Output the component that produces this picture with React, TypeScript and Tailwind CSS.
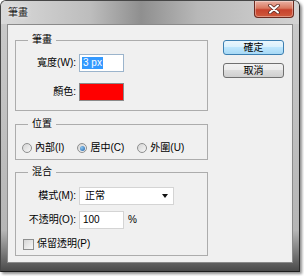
function CloseButton() {
  return (
    <div className="w-[40px] h-[17px] flex items-center justify-center rounded-b-[4px] border border-t-0 border-[#6b2a20] bg-[linear-gradient(to_bottom,#eab1a4,#d9785f_45%,#c7422d_55%,#cf5a3c)] shadow-[inset_0_0_0_1px_rgba(255,255,255,0.35)]">
      <svg width="12" height="10" viewBox="0 0 12 10">
        <path d="M2 1.5 L10 8.5 M10 1.5 L2 8.5" stroke="#5a2a22" strokeWidth="3.6" strokeLinecap="round" />
        <path d="M2 1.5 L10 8.5 M10 1.5 L2 8.5" stroke="#ffffff" strokeWidth="2" strokeLinecap="round" />
      </svg>
    </div>
  );
}

function Radio({ checked }: { checked?: boolean }) {
  return (
    <span className="w-[10px] h-[10px] rounded-full border border-[#8e8f8f] bg-[linear-gradient(135deg,#d4d4d4,#f7f7f7)] flex items-center justify-center">
      {checked && <span className="w-[5px] h-[5px] rounded-full bg-[radial-gradient(circle_at_35%_35%,#8cc6f0,#1d5fa8)]" />}
    </span>
  );
}

function Button({ label, primary }: { label: string; primary?: boolean }) {
  return (
    <div
      className={
        primary
          ? "w-[61px] h-[15px] flex items-center justify-center rounded-[3px] border border-[#3c7fb1] bg-[linear-gradient(to_bottom,#eaf6fd,#d9f0fc_50%,#bee6fd_50%,#a7d9f5)]"
          : "w-[61px] h-[15px] flex items-center justify-center rounded-[3px] border border-[#707070] bg-[linear-gradient(to_bottom,#f2f2f2,#ebebeb_50%,#dddddd_50%,#cfcfcf)]"
      }
    >
      {label}
    </div>
  );
}

export default function App() {
  return (
    <div className="w-[304px] h-[276px] bg-white font-['Liberation_Sans','Noto_Sans_CJK_TC',sans-serif] text-[10px] leading-none text-black">
      <div className="w-[300px] h-[272px] flex flex-col rounded-t-[6px] border border-[#464646] border-b-[#1e1e1e] border-r-[#2a2a2a] shadow-[2px_2px_3px_rgba(0,0,0,0.45)] bg-[linear-gradient(to_bottom,#cbcbcb,#b6b6b6_85%,#4a4a4a)]">
        {/* title bar */}
        <div className="h-[23px] flex items-start justify-between pl-[7px] pr-[5px] rounded-t-[5px] bg-[linear-gradient(to_right,#dadada,#bdbdbd_30%,#8f8f8f_47%,#b8b8b8_66%,#d3d3d3)]">
          <span className="mt-[7px] text-[#1a1a1a] [text-shadow:0_0_4px_#ffffff]">筆畫</span>
          <CloseButton />
        </div>

        {/* content */}
        <div className="flex-1 flex px-[6px] pb-[8px]">
          <div className="flex-1 flex border border-[#8a8a8a] bg-[#f0f0f0]">
            <div className="w-[200px] pl-[7px] pt-[8px] flex flex-col">
              {/* 筆畫 */}
              <fieldset className="w-[193px] h-[78px] border border-[#acacac]">
                <legend className="ml-[12px] px-[4px] h-[14px] leading-[14px]">筆畫</legend>
                <div className="mt-[7px] grid grid-cols-[60px_45px] gap-x-[3px] gap-y-[11px] items-center">
                  <span className="text-right">寬度(W):</span>
                  <div className="h-[18px] flex items-center pl-[2px] bg-white border border-[#9bb4cc]">
                    <span className="bg-[#3399ff] text-white px-[1px] leading-[12px]">3 px</span>
                  </div>
                  <span className="text-right">顏色:</span>
                  <div className="h-[18px] bg-[#ff0000] border border-[#8a8a8a]" />
                </div>
              </fieldset>

              {/* 位置 */}
              <fieldset className="mt-[6px] w-[193px] h-[43px] border border-[#acacac]">
                <legend className="ml-[12px] px-[4px] h-[14px] leading-[14px]">位置</legend>
                <div className="mt-[10px] h-[14px] pl-[6px] flex items-center">
                  <Radio />
                  <span className="ml-[3px]">內部(I)</span>
                  <span className="ml-[13px]"><Radio checked /></span>
                  <span className="ml-[3px]">居中(C)</span>
                  <span className="ml-[13px]"><Radio /></span>
                  <span className="ml-[3px]">外圍(U)</span>
                </div>
              </fieldset>

              {/* 混合 */}
              <fieldset className="mt-[5px] w-[193px] h-[91px] border border-[#acacac]">
                <legend className="ml-[12px] px-[4px] h-[14px] leading-[14px]">混合</legend>
                <div className="mt-[8px] grid grid-cols-[60px_auto] gap-x-[3px] gap-y-[6px] items-center">
                  <span className="text-right">模式(M):</span>
                  <div className="w-[95px] h-[18px] flex items-center justify-between pl-[5px] pr-[5px] bg-white border border-[#d4d4d4]">
                    <span>正常</span>
                    <svg width="6" height="4" viewBox="0 0 6 4">
                      <path d="M0 0 L6 0 L3 4 Z" fill="#111111" />
                    </svg>
                  </div>
                  <span className="text-right">不透明(O):</span>
                  <div className="flex items-center">
                    <div className="w-[45px] h-[18px] flex items-center pl-[3px] bg-white border border-[#d4d4d4]">100</div>
                    <span className="ml-[4px]">%</span>
                  </div>
                </div>
                <div className="mt-[8px] pl-[7px] h-[14px] flex items-center">
                  <span className="w-[11px] h-[11px] border border-[#8e8f8f] bg-[linear-gradient(135deg,#d6d6d6,#f8f8f8)]" />
                  <span className="ml-[3px]">保留透明(P)</span>
                </div>
              </fieldset>
            </div>

            {/* buttons */}
            <div className="ml-[15px] pt-[15px] flex flex-col gap-[8px]">
              <Button label="確定" primary />
              <Button label="取消" />
            </div>
          </div>
        </div>
      </div>
    </div>
  );
}
